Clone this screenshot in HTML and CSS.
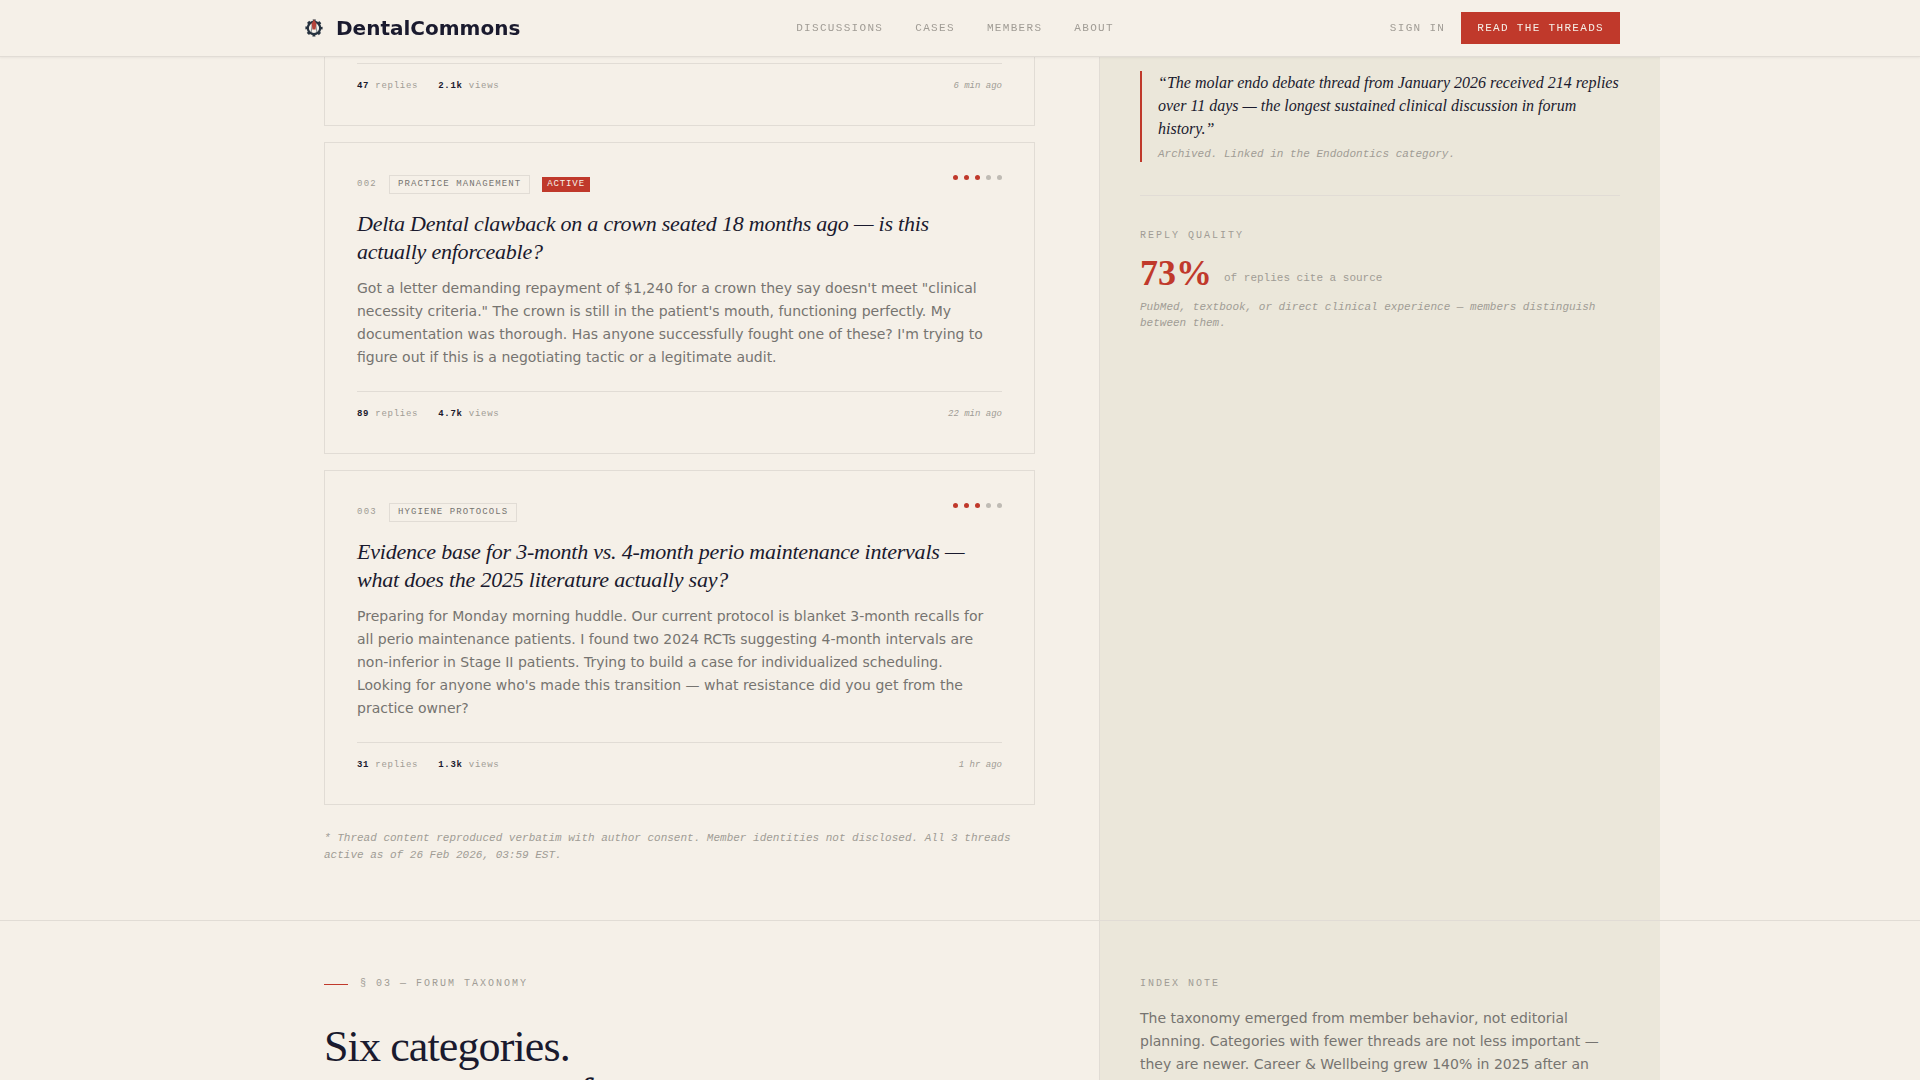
FILE: index.html
```html
<!DOCTYPE html>
<html lang="en">
<head>
<meta charset="utf-8">
<meta name="viewport" content="width=device-width, initial-scale=1">
<title>DentalCommons</title>
<link rel="stylesheet" href="styles.css">
</head>
<body>
<header class="site-header">
  <div class="header-inner">
    <a class="brand" href="#">
      <svg class="brand-mark" viewBox="0 0 28 28" aria-hidden="true">
        <circle cx="14" cy="14" r="6.2" fill="none" stroke="#26323f" stroke-width="2.2"/>
        <circle cx="14" cy="14" r="7.6" fill="none" stroke="#26323f" stroke-width="2" stroke-dasharray="2.9 3.07" stroke-dashoffset="1.45"/>
        <path d="M11.2 18l1.2-8.5M16.8 18l-1.2-8.5" fill="none" stroke="#8b9396" stroke-width="1.2"/>
        <path d="M14 5.5l2.4 4-.9 6h-3l-.9-6z" fill="#b5443a"/>
      </svg>
      <span>DentalCommons</span>
    </a>
    <nav class="site-nav" aria-label="Main">
      <a href="#">Discussions</a>
      <a href="#">Cases</a>
      <a href="#">Members</a>
      <a href="#">About</a>
    </nav>
    <div class="header-actions">
      <a class="sign-in" href="#">Sign in</a>
      <button class="cta" type="button">Read the threads</button>
    </div>
  </div>
</header>

<main>
  <section class="band">
    <div class="split">
      <div class="content threads-column">
        <article class="card card-tail">
          <footer class="card-foot">
            <span class="stats"><span><b>47</b> replies</span><span><b>2.1k</b> views</span></span>
            <time>6 min ago</time>
          </footer>
        </article>

        <article class="card">
          <div class="card-head">
            <div class="meta"><span class="number">002</span><span class="tag">Practice Management</span><span class="status">Active</span></div>
            <div class="dots" role="img" aria-label="3 of 5"><i class="on"></i><i class="on"></i><i class="on"></i><i></i><i></i></div>
          </div>
          <h3>Delta Dental clawback on a crown seated 18 months ago — is this actually enforceable?</h3>
          <p>Got a letter demanding repayment of $1,240 for a crown they say doesn't meet "clinical necessity criteria." The crown is still in the patient's mouth, functioning perfectly. My documentation was thorough. Has anyone successfully fought one of these? I'm trying to figure out if this is a negotiating tactic or a legitimate audit.</p>
          <footer class="card-foot">
            <span class="stats"><span><b>89</b> replies</span><span><b>4.7k</b> views</span></span>
            <time>22 min ago</time>
          </footer>
        </article>

        <article class="card">
          <div class="card-head">
            <div class="meta"><span class="number">003</span><span class="tag">Hygiene Protocols</span></div>
            <div class="dots" role="img" aria-label="3 of 5"><i class="on"></i><i class="on"></i><i class="on"></i><i></i><i></i></div>
          </div>
          <h3>Evidence base for 3-month vs. 4-month perio maintenance intervals — what does the 2025 literature actually say?</h3>
          <p>Preparing for Monday morning huddle. Our current protocol is blanket 3-month recalls for all perio maintenance patients. I found two 2024 RCTs suggesting 4-month intervals are non-inferior in Stage II patients. Trying to build a case for individualized scheduling. Looking for anyone who's made this transition — what resistance did you get from the practice owner?</p>
          <footer class="card-foot">
            <span class="stats"><span><b>31</b> replies</span><span><b>1.3k</b> views</span></span>
            <time>1 hr ago</time>
          </footer>
        </article>

        <p class="footnote">* Thread content reproduced verbatim with author consent. Member identities not disclosed. All 3 threads active as of 26 Feb 2026, 03:59 EST.</p>
      </div>

      <aside class="margin-notes threads-notes">
        <blockquote>
          <p>“The molar endo debate thread from January 2026 received 214 replies over 11 days — the longest sustained clinical discussion in forum history.”</p>
          <cite>Archived. Linked in the Endodontics category.</cite>
        </blockquote>
        <div class="quality">
          <h4 class="label">Reply quality</h4>
          <div class="figure"><strong>73%</strong><span>of replies cite a source</span></div>
          <p class="caption">PubMed, textbook, or direct clinical experience — members distinguish between them.</p>
        </div>
      </aside>
    </div>
  </section>

  <section class="band">
    <div class="split">
      <div class="content taxonomy">
        <div class="label eyebrow">§ 03 — Forum taxonomy</div>
        <h2>Six categories.<br><em>one economy of care.</em></h2>
      </div>
      <aside class="margin-notes taxonomy-notes">
        <h4 class="label">Index note</h4>
        <p class="note">The taxonomy emerged from member behavior, not editorial planning. Categories with fewer threads are not less important — they are newer. Career &amp; Wellbeing grew 140% in 2025 after an</p>
      </aside>
    </div>
  </section>
</main>
</body>
</html>
```
FILE: styles.css
```css
:root {
  --paper: #f5f0e8;
  --margin: #ebe7da;
  --rule: #e1dcd5;
  --ink: #1a1a2e;
  --body: #767470;
  --muted: #a09c95;
  --red: #c0392b;
  --mono: "Liberation Mono", monospace;
  --serif: "Liberation Serif", serif;
  --sans: "DejaVu Sans", sans-serif;
}

* { box-sizing: border-box; }

html { overflow: hidden; }

body {
  margin: 0;
  background: var(--paper);
  color: var(--ink);
  font-family: var(--sans);
}

h2, h3, h4, p, blockquote { margin: 0; font-weight: 400; }
a { color: inherit; text-decoration: none; }

/* Header */
.site-header {
  position: fixed;
  inset: 0 0 auto;
  z-index: 10;
  background: var(--paper);
  border-bottom: 1px solid var(--rule);
  box-shadow: 0 1px 2px rgba(26, 26, 46, .06);
}

.header-inner {
  display: flex;
  align-items: center;
  justify-content: space-between;
  max-width: 1400px;
  height: 56px;
  margin: 0 auto;
  padding: 0 40px;
}

.brand {
  display: flex;
  align-items: center;
  gap: 8px;
  font-size: 20px;
  font-weight: 700;
}

.brand-mark { width: 28px; height: 28px; }

.site-nav, .sign-in, .cta {
  font: 11px/16px var(--mono);
  letter-spacing: .12em;
  text-transform: uppercase;
  color: var(--muted);
}

.site-nav { display: flex; gap: 32px; }
.header-actions { display: flex; align-items: center; gap: 16px; }

.cta {
  padding: 8px 16px;
  border: 0;
  background: var(--red);
  color: var(--paper);
}

/* Page grid */
.band + .band { border-top: 1px solid var(--rule); }

.split {
  display: grid;
  grid-template-columns: minmax(0, 1fr) 561px;
  max-width: 1400px;
  margin: 0 auto;
}

.content { padding: 0 64px; }

.margin-notes {
  padding: 0 40px;
  background: var(--margin);
  border-left: 1px solid var(--rule);
}

/* Thread cards */
.threads-column {
  display: flex;
  flex-direction: column;
  gap: 16px;
  padding-bottom: 56px;
}

.card {
  padding: 32px;
  border: 1px solid var(--rule);
}

.card-tail { padding-top: 63px; border-top: 0; }

.card-head {
  display: flex;
  align-items: flex-start;
  justify-content: space-between;
  margin-bottom: 16px;
}

.meta {
  display: flex;
  align-items: center;
  gap: 12px;
  font: 9px/11px var(--mono);
  letter-spacing: .12em;
  text-transform: uppercase;
}

.number {
  color: var(--muted);
  letter-spacing: .14em;
}

.tag {
  padding: 3px 8px;
  border: 1px solid var(--rule);
  color: var(--body);
}

.status {
  padding: 2px 5px;
  background: var(--red);
  color: var(--paper);
  letter-spacing: .1em;
}

.dots { display: flex; gap: 6px; }

.dots i {
  width: 5px;
  height: 5px;
  border-radius: 50%;
  background: #bfbbb4;
}

.dots .on { background: var(--red); }

.card h3 {
  margin-bottom: 11px;
  font: italic 22px/28px var(--serif);
  letter-spacing: -.01em;
}

.card p {
  max-width: 640px;
  margin-bottom: 22px;
  font-size: 14px;
  line-height: 23px;
  color: var(--body);
}

.card-foot {
  display: flex;
  justify-content: space-between;
  padding-top: 16px;
  border-top: 1px solid var(--rule);
  font: 9px/13px var(--mono);
  color: var(--muted);
}

.stats { display: flex; gap: 20px; letter-spacing: .08em; }
.stats b { color: var(--ink); }
.card-foot time { font-style: italic; }

.footnote {
  padding-top: 9px;
  font: italic 11px/17px var(--mono);
  color: var(--muted);
}

/* Margin column */
.threads-notes { padding-top: 71px; }

blockquote {
  padding-left: 16px;
  border-left: 2px solid var(--red);
}

blockquote p {
  margin-bottom: 6px;
  font: italic 16px/23px var(--serif);
}

cite, .caption {
  display: block;
  font: italic 11px/16px var(--mono);
  color: var(--muted);
}

.quality {
  margin-top: 33px;
  padding-top: 33px;
  border-top: 1px solid var(--rule);
}

.label {
  font: 10px/14px var(--mono);
  letter-spacing: .2em;
  text-transform: uppercase;
  color: var(--muted);
}

.figure {
  display: flex;
  align-items: flex-end;
  gap: 12px;
  margin: 12px 0 8px;
  font: 11px/26px var(--mono);
  color: var(--muted);
}

.figure strong {
  font: 700 36px/36px var(--serif);
  color: var(--red);
}

/* Taxonomy */
.taxonomy, .taxonomy-notes { padding-top: 56px; }

.eyebrow {
  display: flex;
  align-items: center;
  gap: 12px;
}

.eyebrow::before {
  content: "";
  width: 24px;
  height: 1px;
  background: var(--red);
}

.taxonomy h2 {
  margin-top: 32px;
  font: 44px/48px var(--serif);
  letter-spacing: -.02em;
}

.note {
  margin-top: 16px;
  font-size: 14px;
  line-height: 23px;
  color: var(--body);
}
```
